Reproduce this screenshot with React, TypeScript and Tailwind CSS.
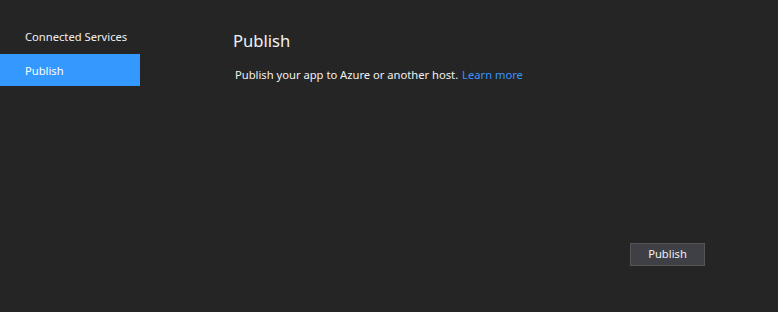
import React from "react";

export default function App() {
  return (
    <div
      className="w-[778px] h-[312px] bg-[#252526] text-[#f1f1f1] flex overflow-hidden"
      style={{ fontFamily: '"Segoe UI", "Noto Sans", "Open Sans", sans-serif' }}
    >
      <div className="w-[140px] shrink-0 pt-[26px] flex flex-col">
        <div className="h-[28px] pl-[25px] pb-[6px] text-[11.2px] flex items-center">Connected Services</div>
        <div className="h-[32px] pl-[25px] pt-[2px] text-[11.2px] flex items-center bg-[#3399ff] text-white">Publish</div>
      </div>
      <div className="flex-1 pl-[93px] pt-[29px] pr-[73px] pb-[46px] flex flex-col">
        <div className="text-[16.6px] leading-[24px]">Publish</div>
        <div className="mt-[14px] pl-[2px] text-[11.2px] leading-[16px]">
          Publish your app to Azure or another host.{" "}
          <span className="text-[#3794ff] ml-[1px]">Learn more</span>
        </div>
        <div className="flex-1" />
        <div className="flex justify-end">
          <button className="w-[75px] h-[23px] bg-[#3f3f46] border border-[#555555] text-[11.2px] text-[#f1f1f1] flex items-center justify-center">
            Publish
          </button>
        </div>
      </div>
    </div>
  );
}
